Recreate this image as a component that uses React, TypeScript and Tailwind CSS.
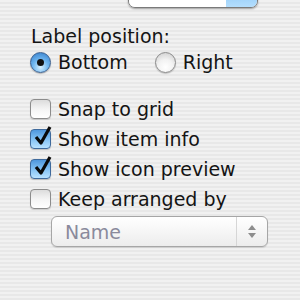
import React from "react";

const font = { fontFamily: '"DejaVu Sans", "Lucida Grande", sans-serif' };

function Radio({ on, label }: { on?: boolean; label: string }) {
    return (
        <div className="flex items-center gap-[7px]">
            {on ? (
                <span className="relative flex h-[21px] w-[21px] items-center justify-center rounded-full border border-[#3a5f8f] bg-[radial-gradient(circle_at_50%_75%,#d8f1ff_0%,#6fb6ef_45%,#2f79c8_100%)] shadow-[0_1px_1px_rgba(0,0,0,0.25)]">
                    <span className="h-[7px] w-[7px] rounded-full bg-[#111]" />
                </span>
            ) : (
                <span className="h-[21px] w-[21px] rounded-full border border-[#8a8a8a] bg-[radial-gradient(circle_at_50%_75%,#ffffff_0%,#f2f2f2_45%,#c9c9c9_100%)] shadow-[0_1px_1px_rgba(0,0,0,0.2)]" />
            )}
            <span>{label}</span>
        </div>
    );
}

function Check({ on, label }: { on?: boolean; label: string }) {
    return (
        <div className="flex h-[30px] items-center gap-[7px]">
            <span
                className={
                    on
                        ? "relative h-[20px] w-[21px] rounded-[4px] border border-[#3f6a9c] bg-[linear-gradient(180deg,#4f97dd_0%,#7cbdf2_45%,#b9e2ff_100%)] shadow-[0_1px_1px_rgba(0,0,0,0.2)]"
                        : "relative h-[20px] w-[21px] rounded-[4px] border border-[#8c8c8c] bg-[linear-gradient(180deg,#dcdcdc_0%,#f4f4f4_50%,#ffffff_100%)] shadow-[0_1px_1px_rgba(0,0,0,0.15)]"
                }
            >
                {on && (
                    <svg
                        className="absolute left-[2px] top-[-4px]"
                        width="20"
                        height="22"
                        viewBox="0 0 20 22"
                    >
                        <path
                            d="M3 11 L8 17 L17 1"
                            fill="none"
                            stroke="#0a0a0a"
                            strokeWidth="3.2"
                            strokeLinejoin="round"
                        />
                    </svg>
                )}
            </span>
            <span>{label}</span>
        </div>
    );
}

export default function App() {
    return (
        <div
            className="h-[300px] w-[300px] overflow-hidden bg-[repeating-linear-gradient(180deg,#f1f1f1_0px,#f1f1f1_2px,#e8e8e8_2px,#e8e8e8_4px)] text-[19px] leading-[22px] text-[#141414]"
            style={font}
        >
            <div className="ml-[128px] -mt-[18px] flex h-[26px] w-[130px] overflow-hidden rounded-[7px] border border-[#7a7a7a] shadow-[0_1px_2px_rgba(0,0,0,0.35)]">
                <div className="flex-1 bg-white" />
                <div className="w-[31px] bg-[linear-gradient(180deg,#7fc0f5,#b4defd)]" />
            </div>

            <div className="ml-[31px] mt-[17px]">Label position:</div>
            <div className="ml-[30px] mt-[4px] flex gap-[27px]">
                <Radio on label="Bottom" />
                <Radio label="Right" />
            </div>

            <div className="ml-[30px] mt-[21px] flex flex-col">
                <Check label="Snap to grid" />
                <Check on label="Show item info" />
                <Check on label="Show icon preview" />
                <Check label="Keep arranged by" />
            </div>

            <div className="ml-[51px] mt-[2px] flex h-[31px] w-[217px] items-center rounded-[6px] border border-[#a6a6a6] bg-[linear-gradient(180deg,#ffffff_0%,#f6f6f6_50%,#ececec_100%)] shadow-[0_1px_1px_rgba(0,0,0,0.12)]">
                <span className="flex-1 pl-[13px] text-[#8a8a9c]">Name</span>
                <span className="flex h-full w-[31px] flex-col items-center justify-center gap-[3px] border-l border-[#d6d6d6]">
                    <svg width="8" height="5" viewBox="0 0 8 5">
                        <path d="M4 0 L8 5 L0 5 Z" fill="#8d8d8d" />
                    </svg>
                    <svg width="8" height="5" viewBox="0 0 8 5">
                        <path d="M0 0 L8 0 L4 5 Z" fill="#8d8d8d" />
                    </svg>
                </span>
            </div>
        </div>
    );
}
